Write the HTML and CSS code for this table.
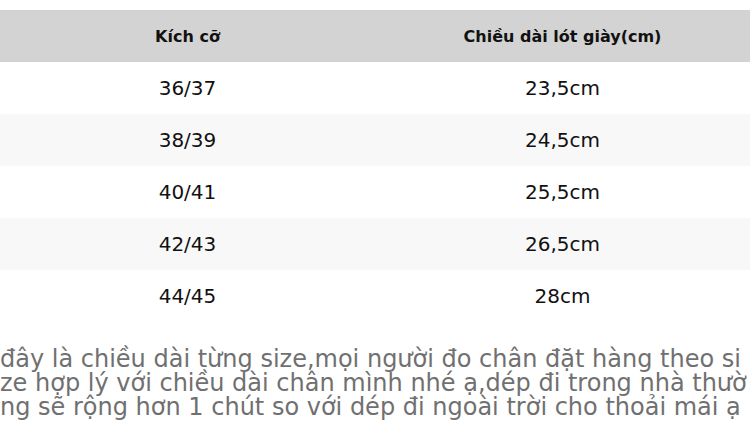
FILE: index.html
```html
<!DOCTYPE html>
<html lang="vi">
<head>
<meta charset="utf-8">
<link rel="stylesheet" href="styles.css">
</head>
<body>
<div class="page">
  <table class="size-table">
    <thead>
      <tr><th>Kích cỡ</th><th>Chiều dài lót giày(cm)</th></tr>
    </thead>
    <tbody>
      <tr><td>36/37</td><td>23,5cm</td></tr>
      <tr><td>38/39</td><td>24,5cm</td></tr>
      <tr><td>40/41</td><td>25,5cm</td></tr>
      <tr><td>42/43</td><td>26,5cm</td></tr>
      <tr><td>44/45</td><td>28cm</td></tr>
    </tbody>
  </table>
  <p class="note">đây là chiều dài từng size,mọi người đo chân đặt hàng theo size hợp lý với chiều dài chân mình nhé ạ,dép đi trong nhà thường sẽ rộng hơn 1 chút so với dép đi ngoài trời cho thoải mái ạ</p>
</div>
</body>
</html>
```
FILE: styles.css
```css
html, body {
  margin: 0;
  padding: 0;
  background: #ffffff;
}
body {
  font-family: "DejaVu Sans", sans-serif;
  width: 750px;
  height: 442px;
  overflow: hidden;
}
.page {
  padding-top: 10px;
}
.size-table {
  width: 750px;
  border-collapse: collapse;
  table-layout: fixed;
}
.size-table th {
  background: #d3d3d3;
  height: 52px;
  padding: 0;
  font-size: 16px;
  font-weight: bold;
  color: #111;
  text-align: center;
}
.size-table td {
  height: 52px;
  padding: 0;
  font-size: 20px;
  color: #111;
  text-align: center;
}
.size-table tbody tr:nth-child(even) td {
  background: #f8f8f8;
}
.note {
  margin: 0;
  padding-top: 25px;
  width: 750px;
  font-size: 24px;
  line-height: 24px;
  color: #707070;
  word-break: break-all;
}
```
